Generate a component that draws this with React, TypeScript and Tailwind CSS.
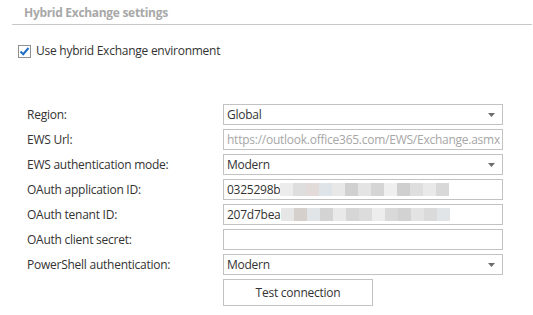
import React from 'react';

const appBlocks = ['#ececec', '#dedede', '#e3dbda', '#dfe4e8', '#e8e8e8', '#d0d0d0', '#e4e4e4', '#d5d5d5', '#efefef', '#cfcfcf', '#dedede', '#e9e9e9', '#d8d8d8'];
const tenantBlocks = ['#e6e6e6', '#d6d0cc', '#e1e5e8', '#d3d3d3', '#e9e9e9', '#d6d6d6', '#dcdcdc', '#ededed', '#d9d9d9', '#d2d2d2', '#e3e3e3', '#dadada', '#e2e5e8'];

const Arrow = () => (
  <svg width="7" height="4" viewBox="0 0 7 4" className="mr-[5px]">
    <path d="M0 0 L7 0 L3.5 4 Z" fill="#6b6b6b" />
  </svg>
);

const Box = ({ children, select }: { children?: React.ReactNode; select?: boolean }) => (
  <div className="flex h-[21px] w-[280px] items-center justify-between border border-[#c2c2c2] bg-white pl-[3px] pr-[2px]">
    <div className="flex items-center overflow-hidden whitespace-nowrap">{children}</div>
    {select && <Arrow />}
  </div>
);

const Blur = ({ colors }: { colors: string[] }) => (
  <div className="flex h-[13px]">
    {colors.map((c, i) => (
      <div key={i} className="h-full w-[13px]" style={{ backgroundColor: c }} />
    ))}
  </div>
);

export default function App() {
  const rows: { label: string; field: React.ReactNode }[] = [
    { label: 'Region:', field: <Box select><span className="text-[#333]">Global</span></Box> },
    { label: 'EWS Url:', field: <Box><span className="text-[#a6a6a6]">https://outlook.office365.com/EWS/Exchange.asmx</span></Box> },
    { label: 'EWS authentication mode:', field: <Box select><span className="text-[#333]">Modern</span></Box> },
    { label: 'OAuth application ID:', field: <Box><span className="text-[#333]">0325298b</span><Blur colors={appBlocks} /></Box> },
    { label: 'OAuth tenant ID:', field: <Box><span className="text-[#333]">207d7bea</span><Blur colors={tenantBlocks} /></Box> },
    { label: 'OAuth client secret:', field: <Box /> },
    { label: 'PowerShell authentication:', field: <Box select><span className="text-[#333]">Modern</span></Box> },
  ];

  return (
    <div className="h-[315px] w-[533px] bg-white text-[12px] leading-[16px] tracking-[-0.25px] text-[#333] [font-family:'Open_Sans','Noto_Sans',sans-serif]">
      {/* Header */}
      <div className="ml-[12px] mr-[1px] border-b border-[#c8c8c8] pt-[5px] pb-[3px] pl-[12px]">
        <span className="text-[12px] font-bold tracking-[-0.3px] text-[#a8a8a8]">Hybrid Exchange settings</span>
      </div>

      {/* Checkbox */}
      <div className="mt-[18px] ml-[18px] flex items-center gap-[5px]">
        <div className="flex h-[13px] w-[13px] items-center justify-center border border-[#8f8f8f] bg-white">
          <svg width="11" height="11" viewBox="0 0 11 11">
            <path d="M1.5 5.5 L4.2 8.2 L9.5 2" stroke="#1f6fc5" strokeWidth="2" fill="none" />
          </svg>
        </div>
        <span>Use hybrid Exchange environment</span>
      </div>

      {/* Form */}
      <div className="mt-[45px] flex flex-col gap-[4px] pl-[27px]">
        {rows.map((r) => (
          <div key={r.label} className="flex items-center">
            <div className="w-[196px]">{r.label}</div>
            {r.field}
          </div>
        ))}
        <div className="flex">
          <div className="w-[196px]" />
          <button className="h-[27px] w-[150px] border border-[#c2c2c2] bg-white text-[#333]">
            Test connection
          </button>
        </div>
      </div>
    </div>
  );
}
